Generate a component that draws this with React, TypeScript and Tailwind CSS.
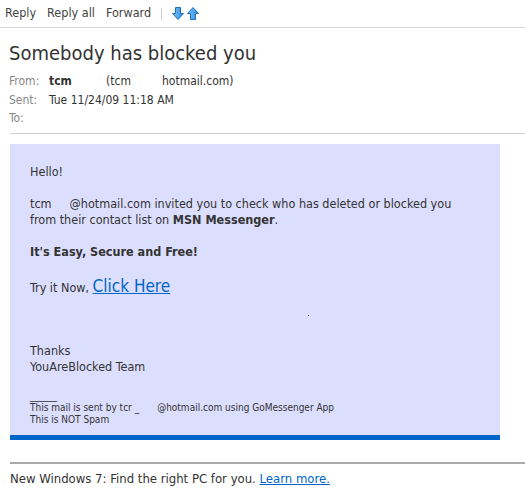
import React from "react";

const font = { fontFamily: '"DejaVu Sans Condensed", "DejaVu Sans", Tahoma, sans-serif' };

// small blue arrow used in the toolbar
const Arrow = ({ up }: { up?: boolean }) => (
  <svg width="12" height="13" viewBox="0 0 12 13">
    <defs>
      <linearGradient id={up ? "gu" : "gd"} x1="0" y1="0" x2="1" y2="0">
        <stop offset="0" stopColor="#7cc4f4" />
        <stop offset="1" stopColor="#2b8ae0" />
      </linearGradient>
    </defs>
    <path
      d={
        up
          ? "M6 0.5 L11.5 6.5 L8.5 6.5 L8.5 12.5 L3.5 12.5 L3.5 6.5 L0.5 6.5 Z"
          : "M3.5 0.5 L8.5 0.5 L8.5 6.5 L11.5 6.5 L6 12.5 L0.5 6.5 L3.5 6.5 Z"
      }
      fill={`url(#${up ? "gu" : "gd"})`}
      stroke="#1f6fc0"
      strokeWidth="1"
      strokeLinejoin="round"
    />
  </svg>
);

export default function App() {
  return (
    <div className="w-[525px] h-[496px] bg-white text-[#333] overflow-hidden" style={font}>
      {/* toolbar */}
      <div className="flex items-center h-[28px] pl-[5px] text-[12.5px] text-[#444] border-b border-[#d4d4d4]">
        <span>Reply</span>
        <span className="ml-[11px]">Reply all</span>
        <span className="ml-[11px]">Forward</span>
        <span className="ml-[10px] w-px h-[12px] bg-[#ccc]" />
        <span className="ml-[10px] flex gap-[3px]">
          <Arrow />
          <Arrow up />
        </span>
      </div>

      {/* header */}
      <div className="pl-[9px]">
        <h1 className="mt-[12px] text-[20px] leading-[26px] text-[#333]">Somebody has blocked you</h1>
        <div className="mt-[6px] text-[12px] leading-[18.5px]">
          <div className="flex">
            <span className="w-[40px] shrink-0 text-[#888]">From:</span>
            <b className="w-[57px] shrink-0 text-[#333]">tcm</b>
            <span className="w-[56px] shrink-0">(tcm</span>
            <span>hotmail.com)</span>
          </div>
          <div className="flex">
            <span className="w-[40px] shrink-0 text-[#888]">Sent:</span>
            <span>Tue 11/24/09 11:18 AM</span>
          </div>
          <div className="flex">
            <span className="w-[40px] shrink-0 text-[#888]">To:</span>
          </div>
        </div>
      </div>
      <div className="ml-[10px] mt-[5px] border-t border-[#cfcfcf]" />

      {/* message body */}
      <div className="ml-[10px] mt-[10px] w-[490px]">
        <div className="bg-[#dcdefe] pl-[20px] pr-[20px] pt-[20px] pb-[9px] text-[12.5px] leading-[16px] text-[#333]">
          <p>Hello!</p>
          <p className="mt-[16px]">
            tcm<span className="inline-block w-[18px]" />@hotmail.com invited you to check who has deleted or blocked you
            from their contact list on <b>MSN Messenger</b>.
          </p>
          <p className="mt-[16px] font-bold">It's Easy, Secure and Free!</p>
          <p className="mt-[16px] leading-[20px]">
            Try it Now, <a className="text-[17px] text-[#0066cc] underline">Click Here</a>
          </p>
          <div className="mt-[17px] h-px">
            <span className="ml-[278px] block w-px h-px bg-[#333]" />
          </div>
          <p className="mt-[27px]">Thanks</p>
          <p>YouAreBlocked Team</p>
          <div className="mt-[15px] text-[10px] leading-[12px]">
            <p>______</p>
            <p>
              This mail is sent by tcr _<span className="inline-block w-[18px]" />@hotmail.com using GoMessenger App
            </p>
            <p>This is NOT Spam</p>
          </div>
        </div>
        <div className="h-[5px] bg-[#0066cc]" />
      </div>

      {/* footer */}
      <div className="ml-[10px] mt-[22px] border-t-2 border-[#aaa]" />
      <div className="ml-[10px] mt-[7px] text-[13px] leading-[16px] text-[#333]">
        New Windows 7: Find the right PC for you. <a className="text-[#0066cc] underline">Learn more.</a>
      </div>
    </div>
  );
}
